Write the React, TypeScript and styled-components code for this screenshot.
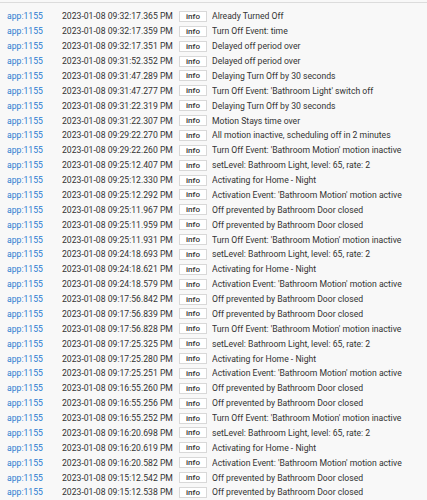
import React from "react";
import styled, { createGlobalStyle } from "styled-components";

const Global = createGlobalStyle`
  html, body { margin: 0; padding: 0; background: #f8f8f8; }
  body { font-family: Roboto, "Noto Sans", sans-serif; }
`;

const Page = styled.div`
  width: 427px;
  height: 500px;
  overflow: hidden;
  background: #f8f8f8;
`;

const TopRule = styled.div`
  height: 1px;
  margin-top: 2px;
  background: #dcdcdc;
`;

const Table = styled.div`
  display: grid;
  grid-template-columns: 55px 117px 33px 1fr;
  grid-auto-rows: 14.875px;
  padding: 6px 0 0 7px;
  font-size: 8.65px;
  color: #333;
`;

const Cell = styled.div`
  display: flex;
  align-items: center;
  white-space: nowrap;
  overflow: hidden;
`;

const AppLink = styled(Cell)`
  color: #2b7bd0;
`;

const Badge = styled.span`
  box-sizing: border-box;
  width: 28px;
  height: 11px;
  border: 1px solid #d8d8d8;
  background: #fff;
  font-size: 8px;
  font-weight: 500;
  color: #333;
  display: flex;
  align-items: center;
  justify-content: center;
`;

type Row = [string, string];

const rows: Row[] = [
  ["09:32:17.365", "Already Turned Off"],
  ["09:32:17.359", "Turn Off Event: time"],
  ["09:32:17.351", "Delayed off period over"],
  ["09:31:52.352", "Delayed off period over"],
  ["09:31:47.289", "Delaying Turn Off by 30 seconds"],
  ["09:31:47.277", "Turn Off Event: 'Bathroom Light' switch off"],
  ["09:31:22.319", "Delaying Turn Off by 30 seconds"],
  ["09:31:22.307", "Motion Stays time over"],
  ["09:29:22.270", "All motion inactive, scheduling off in 2 minutes"],
  ["09:29:22.260", "Turn Off Event: 'Bathroom Motion' motion inactive"],
  ["09:25:12.407", "setLevel: Bathroom Light, level: 65, rate: 2"],
  ["09:25:12.330", "Activating for Home - Night"],
  ["09:25:12.292", "Activation Event: 'Bathroom Motion' motion active"],
  ["09:25:11.967", "Off prevented by Bathroom Door closed"],
  ["09:25:11.959", "Off prevented by Bathroom Door closed"],
  ["09:25:11.931", "Turn Off Event: 'Bathroom Motion' motion inactive"],
  ["09:24:18.693", "setLevel: Bathroom Light, level: 65, rate: 2"],
  ["09:24:18.621", "Activating for Home - Night"],
  ["09:24:18.579", "Activation Event: 'Bathroom Motion' motion active"],
  ["09:17:56.842", "Off prevented by Bathroom Door closed"],
  ["09:17:56.839", "Off prevented by Bathroom Door closed"],
  ["09:17:56.828", "Turn Off Event: 'Bathroom Motion' motion inactive"],
  ["09:17:25.325", "setLevel: Bathroom Light, level: 65, rate: 2"],
  ["09:17:25.280", "Activating for Home - Night"],
  ["09:17:25.251", "Activation Event: 'Bathroom Motion' motion active"],
  ["09:16:55.260", "Off prevented by Bathroom Door closed"],
  ["09:16:55.256", "Off prevented by Bathroom Door closed"],
  ["09:16:55.252", "Turn Off Event: 'Bathroom Motion' motion inactive"],
  ["09:16:20.698", "setLevel: Bathroom Light, level: 65, rate: 2"],
  ["09:16:20.619", "Activating for Home - Night"],
  ["09:16:20.582", "Activation Event: 'Bathroom Motion' motion active"],
  ["09:15:12.542", "Off prevented by Bathroom Door closed"],
  ["09:15:12.538", "Off prevented by Bathroom Door closed"],
];

export default function App() {
  return (
    <Page>
      <Global />
      <TopRule />
      <Table>
        {rows.map(([t, msg], i) => (
          <React.Fragment key={i}>
            <AppLink>app:1155</AppLink>
            <Cell>2023-01-08 {t} PM</Cell>
            <Cell>
              <Badge>info</Badge>
            </Cell>
            <Cell>{msg}</Cell>
          </React.Fragment>
        ))}
      </Table>
    </Page>
  );
}
